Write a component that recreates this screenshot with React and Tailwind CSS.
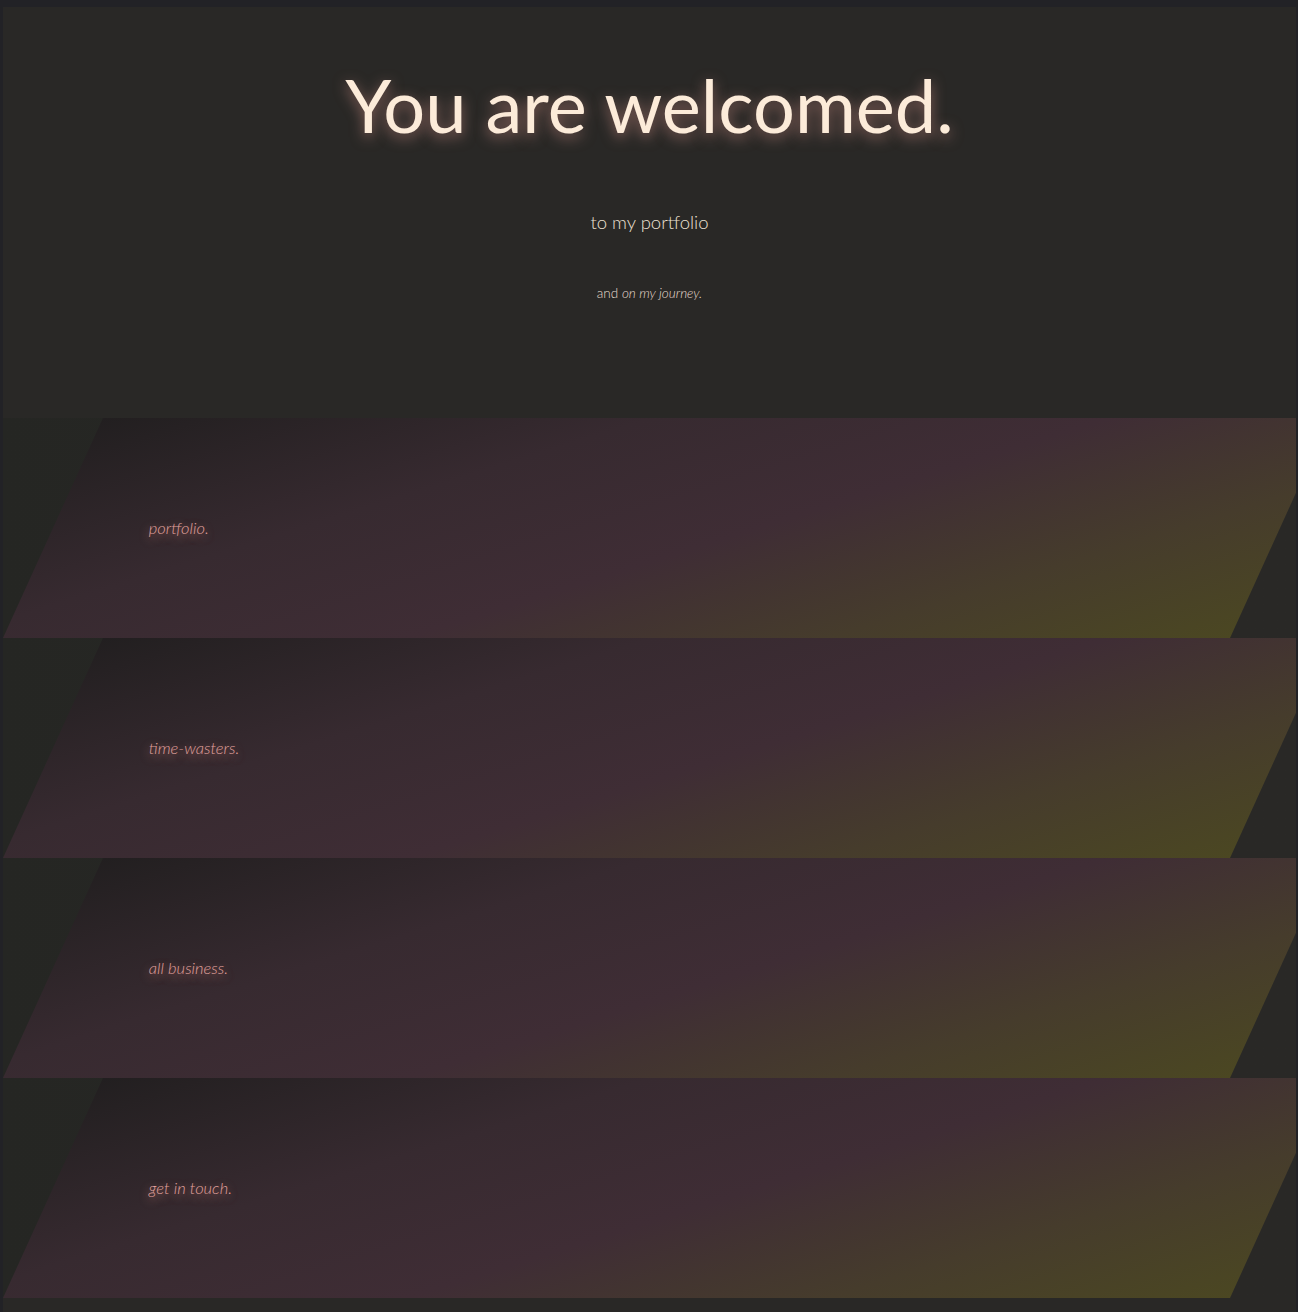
import React from 'react';

const sections = ['portfolio.', 'time-wasters.', 'all business.', 'get in touch.'];

const Row = ({ label }) => (
  <div className="h-[220px] overflow-hidden bg-gradient-to-r from-[#252623] via-[#292826] to-[#292826]">
    <div className="ml-[50px] flex h-full w-[1227px] -skew-x-[24.44deg] items-center bg-[linear-gradient(160deg,#221f20_0%,#372a30_30%,#3f2d35_55%,#463c2c_78%,#4b4722_100%)] pl-[96px]">
      <span className="skew-x-[24.44deg] text-[16.5px] font-light italic text-[#e0a09c] [text-shadow:0_3px_10px_rgba(240,150,140,0.7)]">
        {label}
      </span>
    </div>
  </div>
);

export default function App() {
  return (
    <div className="min-h-screen bg-[#222226] pt-[7px] pl-[3px] pr-[2px] font-['Lato',sans-serif]">
      <div className="bg-[#292826] pb-[14px]">
        <header className="flex flex-col items-center pt-[61px] pb-[115px]">
          <h1 className="text-[74px] font-normal leading-none text-[#fcebd9] [text-shadow:0_4px_14px_rgba(220,150,140,0.6)]">
            You are welcomed.
          </h1>
          <p className="mt-[67px] text-[18.5px] font-light text-[#ece0d1]">to my portfolio</p>
          <p className="mt-[46px] text-[13.5px] font-light text-[#e8ddd0]">
            and <em>on my journey.</em>
          </p>
        </header>
        <div className="flex flex-col">
          {sections.map((s) => (
            <Row key={s} label={s} />
          ))}
        </div>
      </div>
    </div>
  );
}
